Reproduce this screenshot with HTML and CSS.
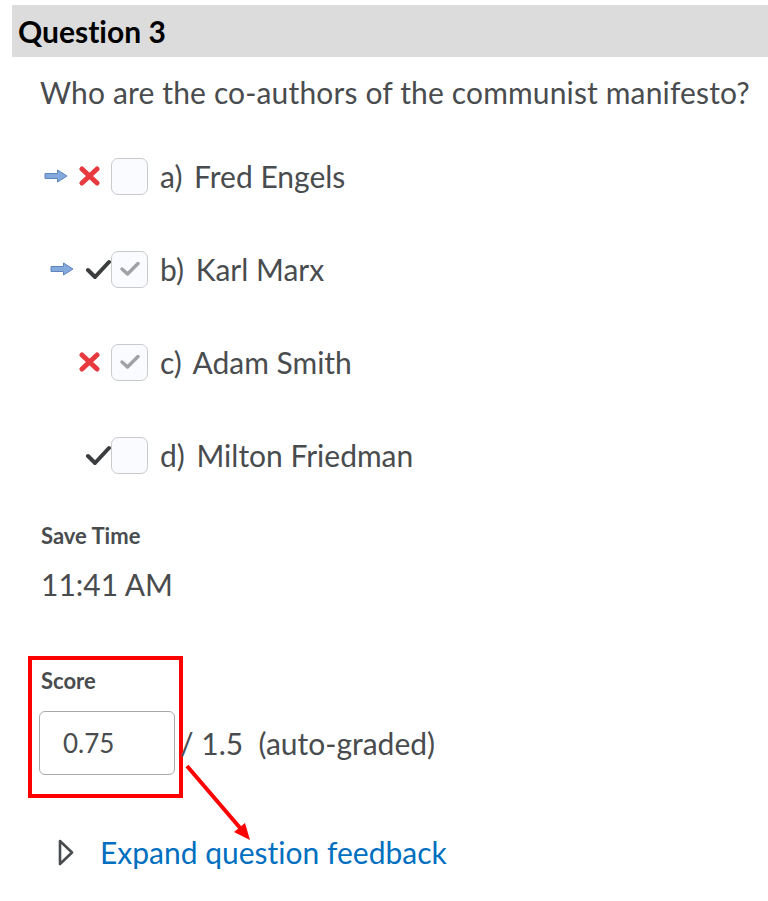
FILE: index.html
```html
<!DOCTYPE html>
<html lang="en">
<head>
  <meta charset="UTF-8" />
  <title>Question 3</title>
  <link rel="stylesheet" href="styles.css">
</head>
<body>
  <div class="page">
    <div class="header">
      <h1>Question 3</h1>
    </div>

    <p class="question">Who are the co-authors of the communist manifesto?</p>

    <div class="options">
      <div class="option">
        <div class="marks">
          <svg class="pointer" width="24" height="14" viewBox="0 0 24 14"><path d="M1 4.5 H13.5 V1 L23 7 L13.5 13 V9.5 H1 Z" fill="#84a9dc" stroke="#5e84bd" stroke-width="1"/></svg>
          <svg class="cross" width="21" height="20" viewBox="0 0 21 20"><path d="M3 3 L18 17 M18 3 L3 17" stroke="#e8393f" stroke-width="5" stroke-linecap="round"/></svg>
        </div>
        <span class="box"></span>
        <span class="label"><span class="letter">a)</span> Fred Engels</span>
      </div>

      <div class="option">
        <div class="marks">
          <svg class="pointer" width="24" height="14" viewBox="0 0 24 14"><path d="M1 4.5 H13.5 V1 L23 7 L13.5 13 V9.5 H1 Z" fill="#84a9dc" stroke="#5e84bd" stroke-width="1"/></svg>
          <svg class="tick" width="26" height="22" viewBox="0 0 26 22"><path d="M3 12 L10 19 L24 4" fill="none" stroke="#3b3d3f" stroke-width="4" stroke-linecap="round" stroke-linejoin="round"/></svg>
        </div>
        <span class="box checked"><svg width="22" height="18" viewBox="0 0 22 18"><path d="M3 9 L8.5 14 L19 3.5" fill="none" stroke="#a0a2a4" stroke-width="3.5" stroke-linecap="round" stroke-linejoin="round"/></svg></span>
        <span class="label"><span class="letter">b)</span> Karl Marx</span>
      </div>

      <div class="option">
        <div class="marks">
          <svg class="cross" width="21" height="20" viewBox="0 0 21 20"><path d="M3 3 L18 17 M18 3 L3 17" stroke="#e8393f" stroke-width="5" stroke-linecap="round"/></svg>
        </div>
        <span class="box checked"><svg width="22" height="18" viewBox="0 0 22 18"><path d="M3 9 L8.5 14 L19 3.5" fill="none" stroke="#a0a2a4" stroke-width="3.5" stroke-linecap="round" stroke-linejoin="round"/></svg></span>
        <span class="label"><span class="letter">c)</span> Adam Smith</span>
      </div>

      <div class="option">
        <div class="marks">
          <svg class="tick" width="26" height="22" viewBox="0 0 26 22"><path d="M3 12 L10 19 L24 4" fill="none" stroke="#3b3d3f" stroke-width="4" stroke-linecap="round" stroke-linejoin="round"/></svg>
        </div>
        <span class="box"></span>
        <span class="label"><span class="letter">d)</span> Milton Friedman</span>
      </div>
    </div>

    <div class="field">
      <div class="field-label">Save Time</div>
      <div class="field-value">11:41 AM</div>
    </div>

    <div class="score-row">
      <div class="score-box">
        <div class="field-label score-label">Score</div>
        <div class="score-input">0.75</div>
      </div>
      <span class="out-of">/ 1.5&nbsp;&nbsp;(auto-graded)</span>
    </div>

    <div class="feedback">
      <svg class="expander" width="16" height="27" viewBox="0 0 16 27"><path d="M2 2 L14 13.5 L2 25 Z" fill="none" stroke="#494c4e" stroke-width="2.6" stroke-linejoin="round"/></svg>
      <a href="#" class="feedback-link">Expand question feedback</a>
    </div>

    <svg class="annotation" width="75" height="85" viewBox="0 0 75 85"><line x1="6" y1="5" x2="60" y2="68" stroke="#f00" stroke-width="4"/><path d="M69 79 L64 62 L53 71 Z" fill="#f00"/></svg>
  </div>
</body>
</html>
```

FILE: styles.css
```css
body {
  margin: 0;
  font-family: Lato, "Noto Sans", sans-serif;
  font-variant-ligatures: none;
  color: #494c4e;
  background: #fff;
}

.page {
  position: relative;
  padding-top: 5px;
}

.header {
  margin-left: 12px;
  height: 52px;
  background-color: #dcdcdc;
  display: flex;
  align-items: center;
  padding-left: 6px;
}

.header h1 {
  margin: 0;
  font-size: 30px;
  font-weight: 700;
  color: #000;
}

.question {
  margin: 17px 0 0 40px;
  font-size: 30px;
  line-height: 36px;
  letter-spacing: 0.15px;
}

.options {
  margin-top: 47px;
}

.option {
  display: flex;
  align-items: center;
  height: 38px;
  margin-bottom: 55px;
}

.option:last-child {
  margin-bottom: 0;
}

.marks {
  width: 111px;
  display: flex;
  justify-content: flex-end;
  align-items: center;
}

.pointer {
  margin-right: 11px;
}

.cross {
  margin-right: 11px;
}

.box {
  width: 35px;
  height: 35px;
  border: 1.5px solid #c8cacc;
  border-radius: 7px;
  background-color: #f9fbff;
  display: flex;
  align-items: center;
  justify-content: center;
}

.label {
  margin-left: 12px;
  font-size: 30px;
  line-height: 36px;
}

.letter {
  margin-right: 4px;
}

.field {
  margin: 49px 0 0 41px;
}

.field-label {
  font-size: 22px;
  line-height: 26px;
  font-weight: 700;
}

.field-value {
  margin-top: 17px;
  font-size: 30px;
  line-height: 36px;
}

.score-row {
  display: flex;
  align-items: flex-end;
  margin: 54px 0 0 28px;
}

.score-box {
  box-sizing: border-box;
  width: 155px;
  border: 4px solid #f00;
  padding: 8px 0 19px 7px;
}

.score-label {
  margin-left: 2px;
}

.score-input {
  box-sizing: border-box;
  margin-top: 17px;
  width: 136px;
  height: 64px;
  border: 1.5px solid #a8aaac;
  border-radius: 6px;
  display: flex;
  align-items: center;
  padding-left: 23px;
  font-size: 26px;
}

.out-of {
  font-size: 30px;
  line-height: 36px;
  margin-left: -3px;
  margin-bottom: 37px;
}

.feedback {
  display: flex;
  align-items: center;
  margin: 36px 0 0 58px;
}

.expander {
  margin-right: 26px;
}

.feedback-link {
  color: #006fbf;
  font-size: 30px;
  line-height: 36px;
  text-decoration: none;
}

.annotation {
  position: absolute;
  left: 181px;
  top: 761px;
}
```
